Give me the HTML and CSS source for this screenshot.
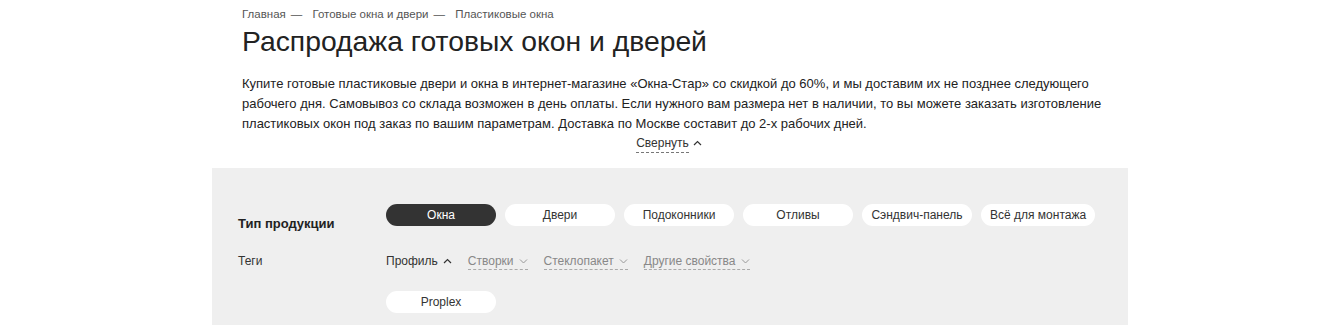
FILE: index.html
```html
<!DOCTYPE html>
<html lang="ru">
<head>
    <meta charset="UTF-8">
    <title>Распродажа готовых окон и дверей</title>
    <link rel="stylesheet" href="styles.css">
</head>
<body>
<div class="page">
    <div class="intro">
        <!--хлебные крошки-->
        <div class="crumbs">
            <a href="#">Главная</a><span class="sep">—</span>
            <a href="#">Готовые окна и двери</a><span class="sep">—</span>
            <a href="#">Пластиковые окна</a>
        </div>
        <h1>Распродажа готовых окон и дверей</h1>
        <p class="text">Купите готовые пластиковые двери и окна в интернет-магазине «Окна-Стар» со скидкой до 60%, и мы доставим их не позднее следующего рабочего дня. Самовывоз со склада возможен в день оплаты. Если нужного вам размера нет в наличии, то вы можете заказать изготовление пластиковых окон под заказ по вашим параметрам. Доставка по Москве составит до 2-х рабочих дней.</p>
        <div class="collapse"><span class="collapse-link">Свернуть</span><svg class="chev" width="9" height="6" viewBox="0 0 9 6"><path d="M1 5L4.5 1.5L8 5" fill="none" stroke="#333" stroke-width="1.2"/></svg></div>
    </div>
    <!--фильтр-->
    <div class="filter">
        <div class="row">
            <div class="label bold">Тип продукции</div>
            <div class="pills">
                <span class="pill active">Окна</span>
                <span class="pill">Двери</span>
                <span class="pill">Подоконники</span>
                <span class="pill">Отливы</span>
                <span class="pill">Сэндвич-панель</span>
                <span class="pill">Всё для монтажа</span>
            </div>
        </div>
        <div class="row tags-row">
            <div class="label">Теги</div>
            <div class="tags">
                <span class="tag open">Профиль<svg width="9" height="6" viewBox="0 0 9 6"><path d="M1 5L4.5 1.5L8 5" fill="none" stroke="#333" stroke-width="1.2"/></svg></span>
                <span class="tag">Створки<svg width="9" height="6" viewBox="0 0 9 6"><path d="M1 1.5L4.5 5L8 1.5" fill="none" stroke="#999" stroke-width="1"/></svg></span>
                <span class="tag">Стеклопакет<svg width="9" height="6" viewBox="0 0 9 6"><path d="M1 1.5L4.5 5L8 1.5" fill="none" stroke="#999" stroke-width="1"/></svg></span>
                <span class="tag">Другие свойства<svg width="9" height="6" viewBox="0 0 9 6"><path d="M1 1.5L4.5 5L8 1.5" fill="none" stroke="#999" stroke-width="1"/></svg></span>
            </div>
        </div>
        <div class="row sub-row">
            <div class="label"></div>
            <div class="pills">
                <span class="pill">Proplex</span>
            </div>
        </div>
    </div>
</div>
</body>
</html>
```

FILE: styles.css
```css
* {
    padding: 0;
    margin: 0;
    box-sizing: border-box;
}
body {
    font-family: "Liberation Sans", Arial, sans-serif;
    color: #222;
    background: #fff;
}
.page {
    width: 916px;
    margin: 0 auto;
}
.intro {
    padding: 6px 20px 15px 30px;
}
.crumbs {
    font-size: 11.5px;
    line-height: 16px;
    color: #555;
}
.crumbs a {
    color: #555;
    text-decoration: none;
}
.sep {
    margin: 0 7px 0 5px;
}
h1 {
    font-weight: normal;
    font-size: 28.3px;
    line-height: 34px;
    color: #222;
    margin-top: 2px;
}
.text {
    font-size: 13px;
    line-height: 20px;
    margin-top: 16px;
    color: #222;
}
.collapse {
    display: flex;
    justify-content: center;
    align-items: center;
    gap: 4px;
    margin-right: 12px;
    font-size: 12px;
    line-height: 18px;
    color: #333;
}
.collapse-link {
    border-bottom: 1px dashed #777;
}
.chev {
    margin-top: -2px;
}
.filter {
    background: #efefef;
    padding: 36px 30px 12px 26px;
}
.row {
    display: flex;
    align-items: flex-start;
}
.label {
    width: 148px;
    flex: none;
    font-size: 12px;
    line-height: 16px;
    color: #333;
    padding-top: 12px;
}
.label.bold {
    font-weight: bold;
    font-size: 13px;
    color: #222;
}
.pills {
    display: flex;
    gap: 9px;
}
.pill {
    min-width: 110px;
    height: 22px;
    padding: 0 9px;
    border-radius: 11px;
    background: #fff;
    font-size: 12px;
    line-height: 22px;
    text-align: center;
    color: #333;
}
.pill.active {
    background: #333;
    color: #fff;
}
.tags-row {
    margin-top: 21px;
}
.tags-row .label {
    padding-top: 0;
}
.tags {
    display: flex;
    gap: 16px;
    font-size: 12px;
    line-height: 16px;
}
.tag {
    display: flex;
    align-items: center;
    gap: 5px;
    color: #888;
    border-bottom: 1px dashed #aaa;
}
.tag.open {
    color: #333;
    border-bottom-color: transparent;
}
.sub-row {
    margin-top: 21px;
}
```
